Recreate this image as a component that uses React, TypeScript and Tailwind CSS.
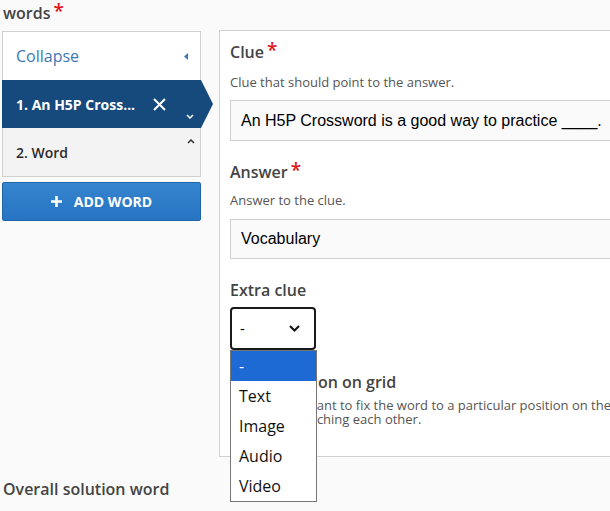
import React from "react";

function Req() {
  return <span className="ml-[3px] relative -top-[2px] text-[19px] text-[#e0161b]">*</span>;
}

function ListPanel() {
  return (
    <div className="w-[199px] shrink-0">
      <div className="border border-[#d0d0d0] bg-white">
        <div className="flex h-[48px] items-center justify-between pl-[13px] pr-[12px]">
          <span className="text-[16px] text-[#3e78b6]">Collapse</span>
          <svg width="4" height="7" viewBox="0 0 4 7">
            <path d="M4 0 L0 3.5 L4 7 Z" fill="#3e78b6" />
          </svg>
        </div>
        <div className="relative -mx-px flex h-[48px] items-center bg-[#174a7c] pl-[14px]">
          <span className="text-[14px] font-bold text-white">1. An H5P Cross...</span>
          <svg className="absolute left-[151px] top-[18px]" width="13" height="13" viewBox="0 0 13 13">
            <path d="M1 1 L12 12 M12 1 L1 12" stroke="white" strokeWidth="2" />
          </svg>
          <svg className="absolute left-[184px] top-[34px]" width="8" height="5" viewBox="0 0 8 5">
            <path d="M1 1 L4 4 L7 1" stroke="white" strokeWidth="1.5" fill="none" />
          </svg>
          <svg className="absolute -right-[12px] top-0" width="12" height="48" viewBox="0 0 12 48">
            <path d="M0 0 L12 24 L0 48 Z" fill="#174a7c" />
          </svg>
        </div>
        <div className="relative flex h-[48px] items-center bg-[#f3f3f3] pl-[13px]">
          <span className="text-[14px] font-semibold text-[#2b2b2b]">2. Word</span>
          <svg className="absolute left-[184px] top-[11px]" width="8" height="5" viewBox="0 0 8 5">
            <path d="M1 4 L4 1 L7 4" stroke="#333" strokeWidth="1.5" fill="none" />
          </svg>
        </div>
      </div>
      <button className="mt-[5px] flex h-[39px] w-full items-center justify-center gap-[12px] rounded-[2px] border border-[#1f64a8] bg-gradient-to-b from-[#3685d0] to-[#2674c2] text-[14px] font-bold text-white">
        <svg width="11" height="11" viewBox="0 0 11 11">
          <path d="M5.5 0 V11 M0 5.5 H11" stroke="white" strokeWidth="2.6" />
        </svg>
        <span>ADD WORD</span>
      </button>
    </div>
  );
}

function Label({ text, req }: { text: string; req?: boolean }) {
  return (
    <div className="flex h-[22px] items-center text-[16px] font-semibold text-[#444]">
      {text}
      {req && <Req />}
    </div>
  );
}

function Desc({ children }: { children: React.ReactNode }) {
  return <div className="text-[13px] leading-[16px] text-[#555]">{children}</div>;
}

function Input({ value, h }: { value: string; h: string }) {
  return (
    <div
      className={`flex ${h} w-[420px] items-center border border-[#d0d0d0] bg-[#fafafa] pl-[10px] font-['Liberation_Sans',Arial,sans-serif] text-[16px] text-black whitespace-nowrap`}
    >
      {value}
    </div>
  );
}

function EditPanel() {
  return (
    <div className="relative -mt-px w-[440px] shrink-0 border border-[#d0d0d0] bg-white pl-[10px] pt-[10px] pb-[30px]">
      <Label text="Clue" req />
      <div className="mt-[11px]">
        <Desc>Clue that should point to the answer.</Desc>
      </div>
      <div className="mt-[10px]">
        <Input value="An H5P Crossword is a good way to practice ____." h="h-[41px]" />
      </div>
      <div className="mt-[20px]">
        <Label text="Answer" req />
      </div>
      <div className="mt-[9px]">
        <Desc>Answer to the clue.</Desc>
      </div>
      <div className="mt-[11px]">
        <Input value="Vocabulary" h="h-[40px]" />
      </div>
      <div className="mt-[20px]">
        <Label text="Extra clue" />
      </div>
      <div className="mt-[6px] flex h-[43px] w-[86px] items-center justify-between rounded-[4px] border-2 border-[#1a1a1a] bg-white pl-[8px] pr-[14px] text-[15px] text-black">
        <span>-</span>
        <svg width="11" height="7" viewBox="0 0 11 7">
          <path d="M1 1 L5.5 5.5 L10 1" stroke="#111" strokeWidth="2" fill="none" />
        </svg>
      </div>
      <div className="mt-[21px]">
        <Label text="Fixed position on grid" />
      </div>
      <div className="mt-[5px] whitespace-nowrap text-[13px] leading-[14px] text-[#555]">
        <div>Check if you want to fix the word to a particular position on the grid.</div>
        <div>Words not touching each other.</div>
      </div>

      <div className="absolute left-[10px] top-[319px] z-10 w-[87px] border border-[#767676] bg-white text-[16px] text-[#111]">
        {["-", "Text", "Image", "Audio", "Video"].map((o, i) => (
          <div
            key={o}
            className={`flex h-[30px] items-center pl-[8px] ${i === 0 ? "bg-[#1d6ad4] text-white" : ""}`}
          >
            {o}
          </div>
        ))}
      </div>
    </div>
  );
}

export default function App() {
  return (
    <div className="relative h-[511px] w-[610px] overflow-hidden bg-[#fafafa] font-['Open_Sans',sans-serif]">
      <div className="flex h-[26px] items-center pl-[3px] text-[16px] font-semibold text-[#444]">
        words
        <Req />
      </div>
      <div className="mt-[5px] flex items-start gap-[18px] pl-[2px]">
        <ListPanel />
        <EditPanel />
      </div>
      <div className="mt-[20px] pl-[3px] text-[16px] font-semibold text-[#444]">Overall solution word</div>
    </div>
  );
}
